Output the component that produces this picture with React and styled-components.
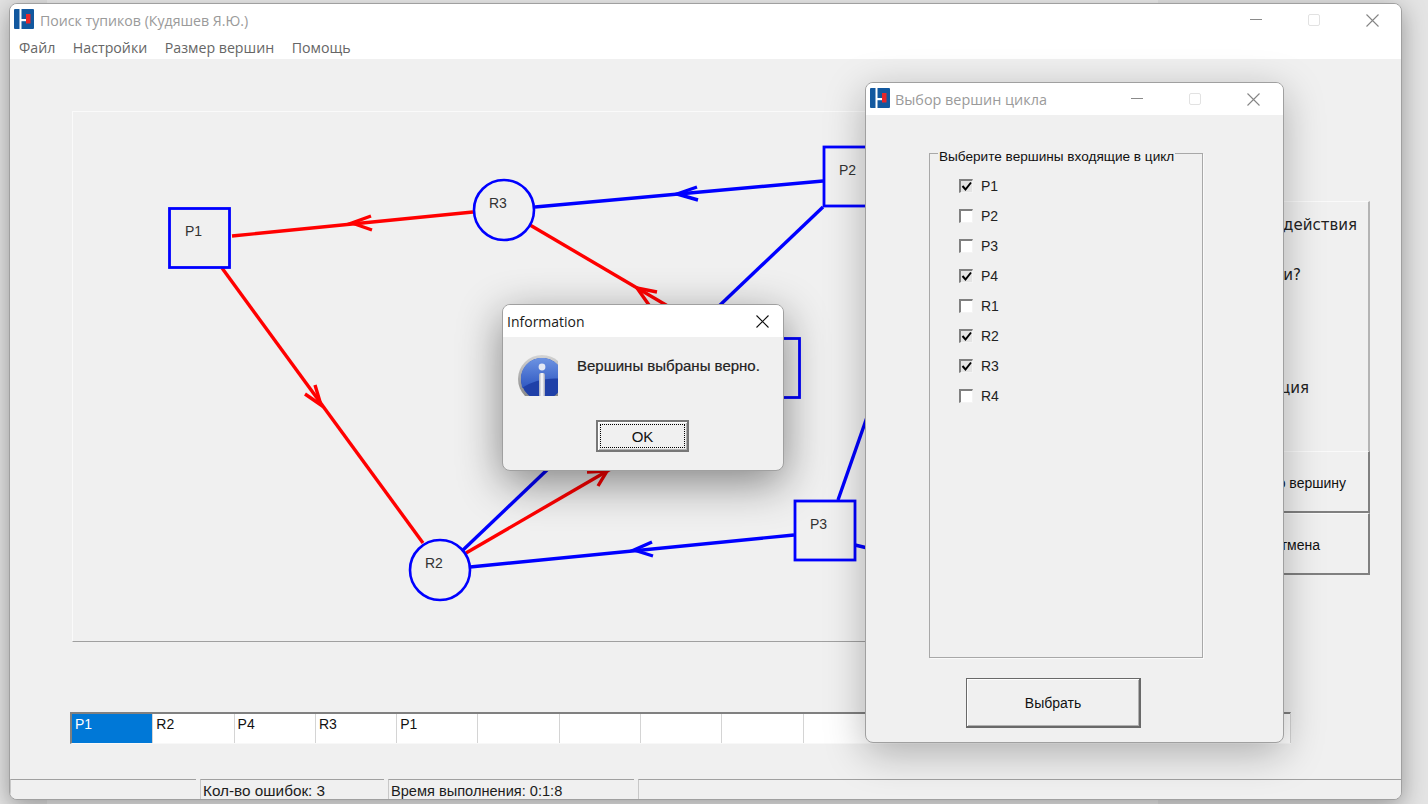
import styled, { createGlobalStyle } from "styled-components";

const GlobalStyle = createGlobalStyle`
  html, body { margin: 0; padding: 0; background: #e4e4e4; }
  body { font-family: "Liberation Sans", Arial, sans-serif; }
`;

const Desktop = styled.div`
  position: relative;
  width: 1428px;
  height: 804px;
  overflow: hidden;
  background: #e4e4e4;
`;

const BackWindow = styled.div`
  position: absolute;
  left: 47px;
  top: -20px;
  width: 1111px;
  height: 860px;
  background: #eeeeee;
`;

const Window = styled.div`
  position: absolute;
  left: ${(p) => p.$left}px;
  top: ${(p) => p.$top}px;
  width: ${(p) => p.$width}px;
  height: ${(p) => p.$height}px;
  box-sizing: border-box;
  display: flex;
  flex-direction: column;
  background: #f0f0f0;
  border: 1px solid #a0a0a0;
  border-radius: 8px;
  overflow: hidden;
  box-shadow: ${(p) => p.$shadow};
`;

const TitleBar = styled.div`
  flex: none;
  height: 32px;
  display: flex;
  align-items: center;
  padding-left: 4px;
  padding-right: ${(p) => p.$right || 0}px;
  background: #fff;
`;

const LogoBox = styled.div`
  flex: none;
  height: 20px;
  margin-bottom: 2px;
`;

const Title = styled.span`
  flex: 1;
  margin-left: ${(p) => p.$gap}px;
  font-family: "Open Sans", sans-serif;
  font-size: ${(p) => p.$size}px;
  color: #9a9a9a;
  white-space: nowrap;
`;

const WinButton = styled.div`
  width: ${(p) => p.$width || 58}px;
  height: 100%;
  display: flex;
  align-items: center;
  justify-content: center;
  flex: none;
`;

const MenuBar = styled.div`
  flex: none;
  height: 23px;
  display: flex;
  align-items: center;
  background: #fff;
  padding-left: 9px;
  gap: 17.5px;
`;

const MenuItem = styled.span`
  font-family: "Open Sans", sans-serif;
  font-size: 14.2px;
  color: #666;
`;

const Body = styled.div`
  flex: 1;
  display: flex;
  flex-direction: column;
  padding-top: 52px;
`;

const Workspace = styled.div`
  display: flex;
  align-items: flex-start;
  margin-left: 62px;
`;

const Canvas = styled.div`
  flex: none;
  width: 1120px;
  height: 531px;
  box-sizing: border-box;
  border: 1px solid #fafafa;
  border-bottom-color: #a0a0a0;
  border-right-color: #a0a0a0;
  overflow: hidden;
`;

const SidePanel = styled.div`
  flex: none;
  width: 130px;
  margin-left: 48px;
  margin-top: 90px;
  display: flex;
  flex-direction: column;
`;

const Prompt = styled.div`
  height: 250px;
  box-sizing: border-box;
  border-top: 1px solid #fafafa;
  border-right: 2px solid #b4b4b4;
`;

const PromptLine = styled.div`
  height: ${(p) => p.$height}px;
  margin-top: ${(p) => p.$top || 0}px;
  padding-right: ${(p) => p.$right}px;
  display: flex;
  align-items: center;
  justify-content: flex-end;
  font-family: "DejaVu Sans", sans-serif;
  font-size: 15px;
  color: #222;
`;

const SideButton = styled.div`
  height: ${(p) => p.$height}px;
  box-sizing: border-box;
  display: flex;
  align-items: center;
  justify-content: flex-end;
  padding-top: 2px;
  padding-right: ${(p) => p.$right}px;
  font-size: 14px;
  color: #111;
  background: #f0f0f0;
  border-top: 1px solid #fafafa;
  border-right: 2px solid #808080;
  border-bottom: 2px solid #808080;
`;

const Sequence = styled.div`
  display: grid;
  grid-template-columns: repeat(15, 81.3px);
  width: 1221px;
  height: 32px;
  box-sizing: border-box;
  margin: 70px 0 0 60px;
  border-top: 2px solid #808080;
  border-left: 2px solid #808080;
  border-bottom: 1px solid #f8f8f8;
  border-right: 1px solid #f8f8f8;
`;

const Cell = styled.div`
  box-sizing: border-box;
  padding: 2px 0 0 3px;
  font-size: 14px;
  line-height: 16px;
  background: ${(p) => (p.$selected ? "#0078d7" : "#fff")};
  color: ${(p) => (p.$selected ? "#fff" : "#111")};
  border-right: 1px solid #d4d4d4;
`;

const StatusBar = styled.div`
  flex: none;
  height: 20px;
  display: flex;
  gap: 4px;
  background: #f0f0f0;
`;

const StatusPane = styled.div`
  flex: ${(p) => (p.$width ? `0 0 ${p.$width}px` : 1)};
  box-sizing: border-box;
  border-top: 1px solid #a0a0a0;
  border-left: 1px solid #c8c8c8;
  padding: 3px 0 0 2px;
  font-size: ${(p) => p.$size || 14}px;
  line-height: 16px;
  color: #1c1c1c;
  white-space: nowrap;
`;

const DialogBody = styled.div`
  flex: 1;
  display: flex;
  flex-direction: column;
  align-items: flex-start;
`;

const GroupBox = styled.div`
  position: relative;
  box-sizing: border-box;
  width: 274px;
  height: 505px;
  margin: 38px 0 0 63px;
  padding: 17px 0 0 29px;
  border: 1px solid #a8a8a8;
  box-shadow: 1px 1px 0 #fafafa;
  display: flex;
  flex-direction: column;
`;

const GroupCaption = styled.div`
  position: absolute;
  left: 8px;
  top: -5px;
  padding: 0 1px;
  background: #f0f0f0;
  font-size: 13.6px;
  line-height: 15px;
  color: #111;
  white-space: nowrap;
`;

const CheckRow = styled.label`
  height: 30px;
  display: flex;
  align-items: center;
  gap: 8px;
  font-size: 14px;
  color: #222;
`;

const CheckBox = styled.span`
  width: 14px;
  height: 14px;
  box-sizing: border-box;
  display: flex;
  align-items: center;
  justify-content: center;
  background: ${(p) => (p.$checked ? "#e4e4e4" : "#fff")};
  border-top: 2px solid #808080;
  border-left: 2px solid #808080;
  border-right: 1px solid #f4f4f4;
  border-bottom: 1px solid #f4f4f4;
`;

const PushButton = styled.div`
  box-sizing: border-box;
  width: ${(p) => p.$width}px;
  height: ${(p) => p.$height}px;
  display: flex;
  align-items: center;
  justify-content: center;
  background: #f0f0f0;
  border: 1px solid #696969;
  border-right-width: 2px;
  border-bottom-width: 2px;
  box-shadow: inset 1px 1px 0 #fff, inset -1px -1px 0 #b0b0b0;
  font-size: 14px;
  color: #111;
`;

const SelectButton = styled(PushButton)`
  margin: 20px 0 0 100px;
`;

const MessageRow = styled.div`
  display: flex;
  align-items: flex-start;
  gap: 19px;
  padding: 18px 0 0 15px;
`;

const MessageText = styled.div`
  margin-top: 3px;
  font-size: 15px;
  line-height: 16px;
  color: #222;
  -webkit-text-stroke: 0.2px #222;
  white-space: nowrap;
`;

const OkButton = styled(PushButton)`
  margin: 24px 0 0 93px;
  border-width: 2px;
  border-color: #777;
  font-size: 15px;
  outline: 1px dotted #000;
  outline-offset: -5px;
`;

const InfoTitle = styled.span`
  flex: 1;
  font-family: "Open Sans", sans-serif;
  font-size: 14px;
  color: #1a1a1a;
`;

function Logo() {
  return (
    <LogoBox>
      <svg width="20" height="20" viewBox="0 0 20 20">
        <rect width="20" height="20" rx="1" fill="#12589f" />
        <rect x="5.5" width="2" height="20" fill="#fff" />
        <rect x="7" y="10" width="6" height="2.2" fill="#fff" />
        <rect x="12" y="5" width="4.5" height="9.5" fill="#e8262a" />
      </svg>
    </LogoBox>
  );
}

function MinIcon({ color }) {
  return (
    <svg width="12" height="12" viewBox="0 0 12 12">
      <path d="M0 5.5H12" stroke={color} strokeWidth="1" />
    </svg>
  );
}

function MaxIcon() {
  return (
    <svg width="12" height="12" viewBox="0 0 12 12">
      <rect x="0.5" y="0.5" width="11" height="11" rx="1.5" fill="none" stroke="#e2e2e2" />
    </svg>
  );
}

function CloseIcon({ color }) {
  return (
    <svg width="13" height="13" viewBox="0 0 13 13">
      <path d="M0.5 0.5L12.5 12.5M12.5 0.5L0.5 12.5" stroke={color} strokeWidth="1.1" fill="none" />
    </svg>
  );
}

function WindowButtons() {
  return (
    <>
      <WinButton><MinIcon color="#8a8a8a" /></WinButton>
      <WinButton><MaxIcon /></WinButton>
      <WinButton><CloseIcon color="#858585" /></WinButton>
    </>
  );
}

function InfoIcon() {
  return (
    <svg width="40" height="41" viewBox="0 0 40 41">
      <defs>
        <linearGradient id="ring" x1="0" y1="0" x2="0" y2="1">
          <stop offset="0" stopColor="#d4d4d4" />
          <stop offset="1" stopColor="#7e7e7e" />
        </linearGradient>
        <linearGradient id="gloss" x1="0" y1="0" x2="0" y2="1">
          <stop offset="0" stopColor="#6d93e2" />
          <stop offset="1" stopColor="#2f58c2" />
        </linearGradient>
        <linearGradient id="stem" x1="0" y1="0" x2="1" y2="0">
          <stop offset="0" stopColor="#a8acbc" />
          <stop offset="0.5" stopColor="#ffffff" />
          <stop offset="1" stopColor="#a0a4b8" />
        </linearGradient>
      </defs>
      <circle cx="24" cy="24" r="24" fill="url(#ring)" />
      <circle cx="24" cy="24" r="21" fill="#1f40a8" />
      <path d="M3 24C3 11 13 3 24 3C36 3 45 12 45 24C30 22 14 26 4 33Z" fill="url(#gloss)" />
      <circle cx="24" cy="12" r="3.4" fill="#e4e8f4" />
      <rect x="21" y="18" width="6" height="24" rx="2" fill="url(#stem)" />
    </svg>
  );
}

// P4 sits under the Information window, only its right edge shows
const squares = [
  { id: "P1", x: 169.5, y: 208.5, tx: 185, ty: 236 },
  { id: "P2", x: 824, y: 147, tx: 839, ty: 175 },
  { id: "P3", x: 795, y: 501, tx: 810, ty: 529 },
  { id: "P4", x: 739.5, y: 338.5 },
];

const circles = [
  { id: "R3", cx: 504, cy: 210, tx: 489, ty: 208 },
  { id: "R2", cx: 440, cy: 570, tx: 425, ty: 568 },
];

const edges = [
  { color: "#ff0000", from: [473, 212], to: [232, 236], head: [[352, 223], [371, 216], [372, 230]] },
  { color: "#ff0000", from: [222, 268], to: [423, 543], head: [[321, 405], [315, 385], [305, 394]] },
  { color: "#ff0000", from: [530, 225], to: [700, 325], head: [[637, 288], [657, 292], [649, 305]] },
  { color: "#ff0000", from: [466, 553], to: [640, 452], head: [[607, 471], [587, 472], [598, 486]] },
  { color: "#0000ff", from: [823, 181], to: [535, 207], head: [[677, 194], [697, 187], [698, 200]] },
  { color: "#0000ff", from: [823, 207], to: [463, 550] },
  { color: "#0000ff", from: [794, 535], to: [470, 567], head: [[634, 550], [652, 542], [653, 556]] },
  { color: "#0000ff", from: [838, 500], to: [880, 380] },
  { color: "#0000ff", from: [855, 545], to: [880, 551] },
];

function Graph() {
  return (
    <svg width="1118" height="529" viewBox="73 112 1118 529" style={{ display: "block" }}>
      {edges.map((e, i) => (
        <g key={i} stroke={e.color} strokeWidth="3.4" fill="none">
          <line x1={e.from[0]} y1={e.from[1]} x2={e.to[0]} y2={e.to[1]} />
          {e.head && (
            <path
              d={`M${e.head[1][0]} ${e.head[1][1]}L${e.head[0][0]} ${e.head[0][1]}L${e.head[2][0]} ${e.head[2][1]}`}
            />
          )}
        </g>
      ))}
      {squares.map((s) => (
        <g key={s.id}>
          <rect x={s.x} y={s.y} width="60" height="59" fill="#f0f0f0" stroke="#0000ff" strokeWidth="2.8" />
          {s.tx && (
            <text x={s.tx} y={s.ty} fontFamily="Liberation Sans" fontSize="14" fill="#333">{s.id}</text>
          )}
        </g>
      ))}
      {circles.map((c) => (
        <g key={c.id}>
          <circle cx={c.cx} cy={c.cy} r="30" fill="#f0f0f0" stroke="#0000ff" strokeWidth="2.6" />
          <text x={c.tx} y={c.ty} fontFamily="Liberation Sans" fontSize="14" fill="#333">{c.id}</text>
        </g>
      ))}
    </svg>
  );
}

const cycle = ["P1", "R2", "P4", "R3", "P1", "", "", "", "", "", "", "", "", "", ""];

const vertices = [
  { id: "P1", checked: true },
  { id: "P2", checked: false },
  { id: "P3", checked: false },
  { id: "P4", checked: true },
  { id: "R1", checked: false },
  { id: "R2", checked: true },
  { id: "R3", checked: true },
  { id: "R4", checked: false },
];

function App() {
  return (
    <Desktop>
      <GlobalStyle />
      <BackWindow />
      <Window $left={9} $top={3} $width={1393} $height={797} $shadow="0 6px 24px rgba(0,0,0,.35)">
        <TitleBar>
          <Logo />
          <Title $gap={6} $size={14.15}>Поиск тупиков (Кудяшев Я.Ю.)</Title>
          <WindowButtons />
        </TitleBar>
        <MenuBar>
          <MenuItem>Файл</MenuItem>
          <MenuItem>Настройки</MenuItem>
          <MenuItem>Размер вершин</MenuItem>
          <MenuItem>Помощь</MenuItem>
        </MenuBar>
        <Body>
          <Workspace>
            <Canvas>
              <Graph />
            </Canvas>
            <SidePanel>
              <Prompt>
                <PromptLine $height={46} $right={11}>действия</PromptLine>
                <PromptLine $height={54} $right={67}>и?</PromptLine>
                <PromptLine $height={46} $top={63} $right={59}>ция</PromptLine>
              </Prompt>
              <SideButton $height={62} $right={22}>о вершину</SideButton>
              <SideButton $height={62} $right={48}>тмена</SideButton>
            </SidePanel>
          </Workspace>
          <Sequence>
            {cycle.map((name, i) => (
              <Cell key={i} $selected={i === 0}>{name}</Cell>
            ))}
          </Sequence>
        </Body>
        <StatusBar>
          <StatusPane $width={186} />
          <StatusPane $width={184} $size={15.3}>Кол-во ошибок: 3</StatusPane>
          <StatusPane $width={246} $size={14.6}>Время выполнения: 0:1:8</StatusPane>
          <StatusPane />
        </StatusBar>
      </Window>

      <Window $left={865} $top={82} $width={419} $height={661} $shadow="0 10px 40px rgba(0,0,0,.28)">
        <TitleBar $right={1}>
          <Logo />
          <Title $gap={5} $size={14.4}>Выбор вершин цикла</Title>
          <WindowButtons />
        </TitleBar>
        <DialogBody>
          <GroupBox>
            <GroupCaption>Выберите вершины входящие в цикл</GroupCaption>
            {vertices.map((v) => (
              <CheckRow key={v.id}>
                <CheckBox $checked={v.checked}>
                  {v.checked && (
                    <svg width="11" height="11" viewBox="0 0 11 11">
                      <path d="M1.5 5L4.5 8.5L10 1.5" stroke="#000" strokeWidth="2" fill="none" />
                    </svg>
                  )}
                </CheckBox>
                {v.id}
              </CheckRow>
            ))}
          </GroupBox>
          <SelectButton $width={175} $height={50}>Выбрать</SelectButton>
        </DialogBody>
      </Window>

      <Window $left={502} $top={304} $width={282} $height={167} $shadow="0 12px 44px rgba(0,0,0,.45)">
        <TitleBar>
          <InfoTitle>Information</InfoTitle>
          <WinButton $width={42}><CloseIcon color="#111" /></WinButton>
        </TitleBar>
        <MessageRow>
          <InfoIcon />
          <MessageText>Вершины выбраны верно.</MessageText>
        </MessageRow>
        <OkButton $width={93} $height={32}>OK</OkButton>
      </Window>
    </Desktop>
  );
}

export default App;
